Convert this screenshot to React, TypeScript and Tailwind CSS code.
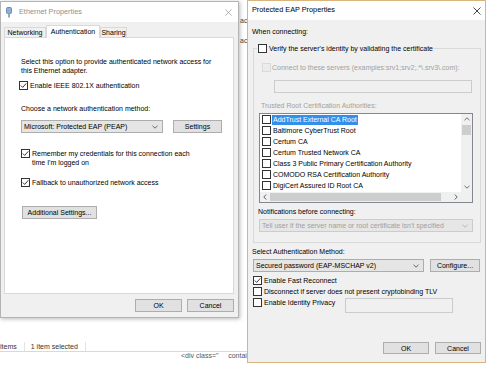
import React from 'react';

const font = "font-['Liberation_Sans',Arial,sans-serif]";

function Check({ checked = false, disabled = false, className = '' }: { checked?: boolean; disabled?: boolean; className?: string }) {
  return (
    <span
      className={`flex h-[9px] w-[9px] shrink-0 items-center justify-center border ${
        disabled ? 'border-[#dadada] bg-[#ebebeb]' : 'border-[#333333] bg-white'
      } ${className}`}
    >
      {checked && (
        <svg width="7" height="7" viewBox="0 0 7 7">
          <path d="M0.8 3.5 L2.7 5.4 L6.3 1.3" fill="none" stroke="#222" strokeWidth="0.9" />
        </svg>
      )}
    </span>
  );
}

function Chevron({ dir = 'down', color = '#555' }: { dir?: 'down' | 'up' | 'left' | 'right'; color?: string }) {
  const d = {
    down: 'M0.5 0.8 L3 3.2 L5.5 0.8',
    up: 'M0.5 3.2 L3 0.8 L5.5 3.2',
  } as const;
  if (dir === 'left' || dir === 'right') {
    return (
      <svg width="4" height="6" viewBox="0 0 4 6">
        <path d={dir === 'left' ? 'M3.2 0.5 L0.8 3 L3.2 5.5' : 'M0.8 0.5 L3.2 3 L0.8 5.5'} fill="none" stroke={color} strokeWidth="1" />
      </svg>
    );
  }
  return (
    <svg width="6" height="4" viewBox="0 0 6 4">
      <path d={d[dir]} fill="none" stroke={color} strokeWidth="0.9" />
    </svg>
  );
}

function CloseX({ color, size }: { color: string; size: number }) {
  return (
    <svg width={size} height={size} viewBox="0 0 8 8">
      <path d="M0.5 0.5 L7.5 7.5 M7.5 0.5 L0.5 7.5" stroke={color} strokeWidth="0.9" />
    </svg>
  );
}

function Btn({ children, className = '' }: { children: React.ReactNode; className?: string }) {
  return (
    <div className={`flex shrink-0 items-center justify-center border border-[#adadad] bg-[#e1e1e1] text-[7px] leading-none text-black ${className}`}>
      {children}
    </div>
  );
}

const certs = [
  'AddTrust External CA Root',
  'Baltimore CyberTrust Root',
  'Certum CA',
  'Certum Trusted Network CA',
  'Class 3 Public Primary Certification Authority',
  'COMODO RSA Certification Authority',
  'DigiCert Assured ID Root CA',
];

function EthernetProperties() {
  return (
    <div className="absolute left-0 top-[1px] flex h-[317px] w-[239px] flex-col border border-[#b4b4b4] bg-[#f0f0f0] shadow-[1px_1px_4px_rgba(0,0,0,0.28)]">
      <div className="flex h-[20px] shrink-0 items-center bg-white">
        <svg className="ml-[5px]" width="6" height="11" viewBox="0 0 6 11">
          <rect x="0.5" y="0.5" width="5" height="6" rx="1" fill="#8fb0d6" stroke="#5a7aa3" strokeWidth="0.8" />
          <rect x="2" y="6.5" width="2" height="4" fill="#9aa7b5" />
        </svg>
        <span className="ml-[7px] text-[7.3px] text-[#8f8f8f]">Ethernet Properties</span>
        <span className="ml-auto mr-[6px] flex">
          <CloseX color="#a0a0a0" size={7} />
        </span>
      </div>

      <div className="flex flex-1 flex-col px-[3px] text-[7px] leading-[9px] text-black">
        <div className="mt-[3px] flex h-[12px] items-end">
          <div className="flex h-[10px] w-[42px] items-center justify-center border border-b-0 border-[#d9d9d9] bg-[#f0f0f0]">Networking</div>
          <div className="relative z-10 -mb-px flex h-[13px] w-[54px] items-center justify-center border border-b-0 border-[#d9d9d9] bg-white pb-[1px]">
            Authentication
          </div>
          <div className="flex h-[10px] w-[27px] items-center justify-center border border-b-0 border-[#d9d9d9] bg-[#f0f0f0]">Sharing</div>
        </div>

        <div className="flex h-[257px] w-[230px] flex-col border border-[#d9d9d9] bg-white pl-[16px]">
          <p className="mt-[20px] leading-[8.5px]">
            Select this option to provide authenticated network access for
            <br />
            this Ethernet adapter.
          </p>
          <div className="mt-[6px] flex items-center">
            <Check checked className="-ml-[2px]" />
            <span className="ml-[2px]">Enable IEEE 802.1X authentication</span>
          </div>
          <div className="mt-[14px]">Choose a network authentication method:</div>
          <div className="mt-[7px] flex">
            <div className="flex h-[13px] w-[142px] items-center justify-between border border-[#adadad] bg-[#e5e5e5] pl-[2px] pr-[4px]">
              <span>Microsoft: Protected EAP (PEAP)</span>
              <Chevron />
            </div>
            <Btn className="ml-[10px] h-[13px] w-[49px]">Settings</Btn>
          </div>
          <div className="mt-[16px] flex items-start">
            <Check checked />
            <span className="ml-[2px]">
              Remember my credentials for this connection each
              <br />
              time I'm logged on
            </span>
          </div>
          <div className="mt-[11px] flex items-center">
            <Check checked />
            <span className="ml-[2px]">Fallback to unauthorized network access</span>
          </div>
          <Btn className="ml-[1px] mt-[19px] h-[13px] w-[75px]">Additional Settings...</Btn>
        </div>

        <div className="mt-[5px] flex justify-end gap-[5px] pr-[1px]">
          <Btn className="h-[13px] w-[47px]">OK</Btn>
          <Btn className="h-[13px] w-[47px]">Cancel</Btn>
        </div>
      </div>
    </div>
  );
}

function CertList() {
  return (
    <div className="mt-[3px] flex h-[90px] w-[214px] flex-col border border-[#828790] bg-white">
      <div className="flex h-[78px]">
        <div className="flex flex-1 flex-col overflow-hidden">
          {certs.map((c, i) => (
            <div key={c} className="flex h-[11px] shrink-0 items-center">
              <Check className="ml-[2px]" />
              <span className={`ml-[1px] px-[1px] leading-[10px] whitespace-nowrap ${i === 0 ? 'bg-[#3390ea] text-white' : ''}`}>{c}</span>
            </div>
          ))}
        </div>
        <div className="flex w-[11px] flex-col bg-[#f0f0f0]">
          <div className="flex h-[10px] items-center justify-center">
            <Chevron dir="up" color="#606060" />
          </div>
          <div className="mx-[1px] mt-[1px] h-[10px] bg-[#cdcdcd]" />
          <div className="flex-1" />
          <div className="flex h-[11px] items-center justify-center">
            <Chevron dir="down" color="#606060" />
          </div>
        </div>
      </div>
      <div className="flex h-[10px] bg-[#f0f0f0]">
        <div className="flex w-[10px] items-center justify-center">
          <Chevron dir="left" color="#606060" />
        </div>
        <div className="my-[1px] w-[171px] bg-[#cdcdcd]" />
        <div className="flex-1" />
        <div className="flex w-[10px] items-center justify-center">
          <Chevron dir="right" color="#606060" />
        </div>
        <div className="w-[11px] bg-[#f0f0f0]" />
      </div>
    </div>
  );
}

function PeapProperties() {
  return (
    <div className="absolute left-[247px] top-0 flex h-[363px] w-[239px] flex-col border border-[#d8b47f] bg-[#f0f0f0]">
      <div className="flex h-[19px] shrink-0 items-center bg-white pl-[4px]">
        <span className="text-[7.3px] text-black">Protected EAP Properties</span>
        <span className="ml-auto mr-[4px] flex">
          <CloseX color="#333" size={8} />
        </span>
      </div>

      <div className="flex flex-1 flex-col px-[4px] text-[7px] leading-[9px] text-black">
        <div className="mt-[7px]">When connecting:</div>

        <fieldset className="ml-[1px] mt-[8px] w-[228px] border border-[#d9d9d9] p-0">
          <legend className="ml-[3px] flex items-center px-[1px]">
            <Check />
            <span className="ml-[2px]">Verify the server's identity by validating the certificate</span>
          </legend>
          <div className="flex flex-col px-[5px] pb-[10px]">
            <div className="mt-[10px] flex items-center text-[#a0a0a0]">
              <Check disabled className="ml-[3px]" />
              <span className="ml-[1px]">Connect to these servers (examples:srv1;srv2;.*\.srv3\.com):</span>
            </div>
            <div className="ml-[15px] mt-[8px] h-[13px] w-[198px] border border-[#cccccc] bg-[#f0f0f0]" />
            <div className="ml-[2px] mt-[8px] text-[#a0a0a0]">Trusted Root Certification Authorities:</div>
            <CertList />
            <div className="-ml-[1px] mt-[4px]">Notifications before connecting:</div>
            <div className="mt-[3px] flex h-[13px] w-[214px] items-center justify-between border border-[#cccccc] bg-[#e6e6e6] pl-[2px] pr-[4px] text-[#a0a0a0]">
              <span>Tell user if the server name or root certificate isn't specified</span>
              <Chevron color="#b0b0b0" />
            </div>
          </div>
        </fieldset>

        <div className="mt-[4px]">Select Authentication Method:</div>
        <div className="mt-[3px] flex">
          <div className="ml-[1px] flex h-[13px] w-[171px] items-center justify-between border border-[#adadad] bg-[#e5e5e5] pl-[2px] pr-[4px]">
            <span>Secured password (EAP-MSCHAP v2)</span>
            <Chevron />
          </div>
          <Btn className="ml-[6px] h-[13px] w-[50px]">Configure...</Btn>
        </div>

        <div className="mt-[4px] flex items-center">
          <Check checked className="ml-[1px]" />
          <span className="ml-[2px]">Enable Fast Reconnect</span>
        </div>
        <div className="mt-[2px] flex items-center">
          <Check className="ml-[1px]" />
          <span className="ml-[2px]">Disconnect if server does not present cryptobinding TLV</span>
        </div>
        <div className="mt-[2px] flex items-start">
          <Check className="ml-[1px]" />
          <span className="ml-[2px] w-[79px]">Enable Identity Privacy</span>
          <div className="ml-[2px] h-[15px] w-[108px] border border-[#cccccc] bg-[#f0f0f0]" />
        </div>

        <div className="mt-[29px] flex justify-end gap-[6px]">
          <Btn className="h-[12px] w-[46px] border-[#0078d7]">OK</Btn>
          <Btn className="h-[12px] w-[46px]">Cancel</Btn>
        </div>
      </div>
    </div>
  );
}

export default function App() {
  return (
    <div className={`relative h-[365px] w-[490px] overflow-hidden bg-white ${font}`}>
      {/* windows lying behind the dialogs */}
      <div className="absolute left-[240px] top-[16px] flex flex-col gap-[11px] text-[7px] leading-[9px] text-[#444]">
        <span>ac</span>
        <span>ac</span>
      </div>
      <div className="absolute left-0 top-[341px] flex h-[11px] w-[247px] items-center border-b border-[#d9d9d9] text-[7px] leading-[9px] text-[#333]">
        <span>items</span>
        <span className="ml-[7px] h-[9px] w-px bg-[#e3e3e3]" />
        <span className="ml-[6px]">1 item selected</span>
        <span className="ml-[7px] h-[9px] w-px bg-[#e3e3e3]" />
      </div>
      <div className="absolute left-[181px] top-[352px] whitespace-pre text-[7px] leading-[8px] text-[#555]">&lt;div class="     contain</div>

      <EthernetProperties />
      <PeapProperties />
    </div>
  );
}
